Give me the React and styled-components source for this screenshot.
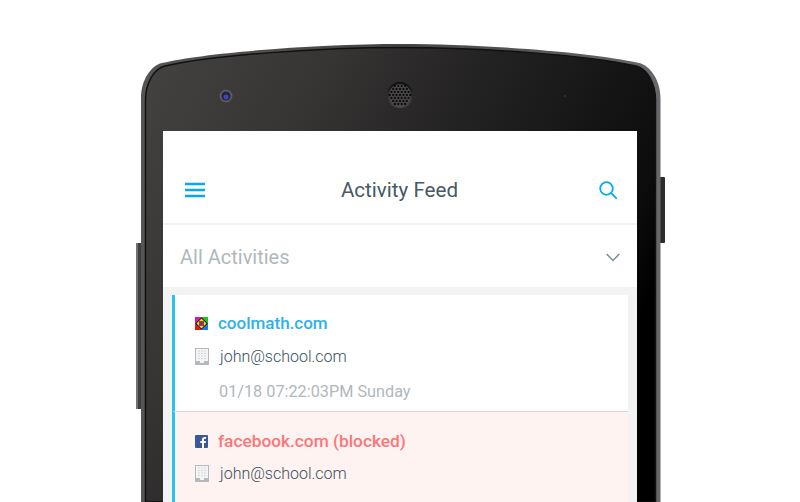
import React from 'react';
import styled, {createGlobalStyle} from 'styled-components';

const GlobalStyle = createGlobalStyle`
  html, body {
    margin: 0;
    padding: 0;
    background: #fff;
    font-family: Roboto, "Liberation Sans", sans-serif;
  }
`

const Page = styled.div`
  width: 800px;
  height: 502px;
  overflow: hidden;
  background: #fff;
`

const Device = styled.div`
  position: relative;
  width: 800px;
  height: 502px;
  padding: 131px 163px 0;
  box-sizing: border-box;
`

const Shell = styled.svg`
  position: absolute;
  left: 0;
  top: 0;
`

const Screen = styled.main`
  position: relative;
  height: 371px;
  background: #fff;
  overflow: hidden;
`

const Toolbar = styled.header`
  height: 94px;
  display: flex;
  align-items: center;
  justify-content: space-between;
  padding: 26px 20px 0 22px;
  box-sizing: border-box;
  border-bottom: 2px solid #f3f3f3;
`

const IconSlot = styled.button`
  display: flex;
  border: 0;
  padding: 0;
  background: none;
`

const Title = styled.h1`
  margin: 0 5px 0 0;
  font-size: 20.6px;
  font-weight: 400;
  color: #455a64;
`

const Filter = styled.div`
  height: 62px;
  display: flex;
  align-items: center;
  justify-content: space-between;
  padding: 2px 17px 0 17px;
  box-sizing: border-box;
  font-size: 20px;
  color: #b0b8bc;
`

const Feed = styled.section`
  background: #f3f3f3;
  padding: 8px 9px 0;
  height: 300px;
`

const Card = styled.article`
  height: ${p => p.$height}px;
  box-sizing: border-box;
  border-left: 3px solid #27c3ea;
  border-bottom: ${p => (p.$last ? '0' : '1px solid #d8d8d8')};
  background: ${p => (p.$blocked ? '#fff3f1' : '#fff')};
  padding: ${p => (p.$blocked ? '19px' : '18px')} 0 0 20px;
`

const Row = styled.div`
  height: 20px;
  display: flex;
  align-items: center;
  gap: ${p => p.$gap || 11}px;
  margin-bottom: ${p => p.$after || 0}px;
`

const Site = styled.a`
  font-size: ${p => (p.$blocked ? '17.3px' : '17px')};
  font-weight: 500;
  color: ${p => (p.$blocked ? '#ff7478' : '#2eb0f0')};
`

const Email = styled.span`
  font-size: 16px;
  font-weight: 300;
  color: #37505c;
`

const Stamp = styled.span`
  margin-left: 24px;
  font-size: 16.25px;
  font-weight: 400;
  color: #b0b8bc;
`

const MenuIcon = () => (
  <svg width="20" height="16" viewBox="0 0 20 16">
    <path d="M0 2h20M0 8h20M0 14h20" stroke="#03a9f4" strokeWidth="2.400" fill="none" />
  </svg>
)

const SearchIcon = () => (
  <svg width="18" height="18" viewBox="0 0 18 18" fill="none" stroke="#03a9f4" strokeWidth="1.800" strokeLinecap="round">
    <circle cx="7.500" cy="7.500" r="6.300" />
    <path d="M12.200 12.200l5 5" />
  </svg>
)

const ChevronIcon = () => (
  <svg width="14" height="9" viewBox="0 0 14 9" fill="none" stroke="#78909c" strokeWidth="1.500">
    <path d="M.7 1l6.300 6.500L13.300 1" />
  </svg>
)

const BuildingIcon = () => (
  <svg width="14" height="17" viewBox="0 0 14 17">
    <rect x=".5" y=".5" width="13" height="16" fill="#f4f4f4" stroke="#b4b9bc" />
    <path d="M3 3h2M6 3h2M9 3h2M3 5.500h2M6 5.500h2M9 5.500h2M3 8h2M6 8h2M9 8h2M3 10.500h2M6 10.500h2M9 10.500h2" stroke="#d5d8da" />
    <path d="M1 16v-3h4v2h4v-2h4v3z" fill="#b4b9bc" />
  </svg>
)

const CoolmathIcon = () => (
  <svg width="13" height="13" viewBox="0 0 13 13">
    <path d="M0 0h6.500L0 6.500z" fill="#e010c0" />
    <path d="M6.500 0H13v6.500z" fill="#18c818" />
    <path d="M0 6.500V13h6.500z" fill="#f01010" />
    <path d="M13 6.500V13H6.500z" fill="#1878f0" />
    <path d="M6.500 0L13 6.500 6.500 13 0 6.500z" fill="#111" />
    <path d="M6.500 1.500l5 5-5 5-5-5z" fill="#f4e010" />
    <rect x="4.500" y="4.500" width="4" height="4" fill="#405090" stroke="#c03030" />
  </svg>
)

const FacebookIcon = () => (
  <svg width="13" height="13" viewBox="0 0 13 13">
    <rect width="13" height="13" rx="1" fill="#3b5998" />
    <path d="M9 13V8h1.700l.3-2H9V4.800c0-.6.2-1 1-1h1.100V2.100C10.800 2 10.200 2 9.600 2 8 2 7 3 7 4.600V6H5.300v2H7v5z" fill="#fff" />
  </svg>
)

// hex grid of holes for the earpiece mesh
const holes = [];
for (let row = -3; row <= 3; row++) {
  for (let col = -4; col <= 4; col++) {
    const x = 400 + col * 3.4 + (row % 2 ? 1.7 : 0);
    const y = 95 + row * 3;
    if (Math.hypot(x - 400, y - 95) < 10.5) holes.push([x, y]);
  }
}

const PhoneShell = () => (
  <Shell width="800" height="502" viewBox="0 0 800 502">
    <defs>
      <linearGradient id="face" x1="148" y1="60" x2="640" y2="320" gradientUnits="userSpaceOnUse">
        <stop offset="0" stopColor="#444141" />
        <stop offset="0.3" stopColor="#363333" />
        <stop offset="0.45" stopColor="#2a2828" />
        <stop offset="0.65" stopColor="#1c1c1c" />
        <stop offset="0.9" stopColor="#0c0c0c" />
        <stop offset="1" stopColor="#000" />
      </linearGradient>
      <linearGradient id="rim" x1="141" y1="0" x2="660" y2="0" gradientUnits="userSpaceOnUse">
        <stop offset="0" stopColor="#555" />
        <stop offset="0.5" stopColor="#454545" />
        <stop offset="1" stopColor="#66676a" />
      </linearGradient>
      <linearGradient id="earpiece" x1="0" y1="0" x2="0" y2="1">
        <stop offset="0" stopColor="#0a0a0a" />
        <stop offset="1" stopColor="#4a4a4a" />
      </linearGradient>
    </defs>
    <rect x="136" y="243" width="6" height="166" rx="1" fill="#3f3f3f" />
    <rect x="136" y="243" width="2" height="166" fill="#707274" />
    <rect x="659" y="177" width="6" height="66" rx="1" fill="#2c2c2c" />
    <path d="M141 502V98C141 80 151 65.500 162 63 210 52 320 44 400.500 44 481 44 591 52 639 63 650 65.500 660.500 80 660.500 98V502Z" fill="url(#rim)" />
    <path d="M145.500 502V100C145.500 83 154 68.500 165 66 213 55 320 47.500 400.500 47.500 481 47.500 588 55 636 66 647 68.500 655.500 83 655.500 100V502Z" fill="url(#face)" stroke="#111" strokeWidth="1.500" />
    <circle cx="226" cy="96" r="6.500" fill="#5a5a62" />
    <circle cx="226" cy="96" r="4.500" fill="#23233a" />
    <circle cx="226" cy="97" r="2.500" fill="#4646b0" />
    <circle cx="400" cy="95" r="13" fill="url(#earpiece)" />
    <circle cx="400" cy="95" r="11" fill="#4c4c4c" />
    {holes.map(([x, y], i) => <circle key={i} cx={x} cy={y} r="1.150" fill="#0c0c0c" />)}
    <circle cx="565" cy="96" r="1" fill="#333" />
  </Shell>
)

const App = () => (
  <Page>
    <GlobalStyle />
    <Device>
      <PhoneShell />
      <Screen>
        <Toolbar>
          <IconSlot><MenuIcon /></IconSlot>
          <Title>Activity Feed</Title>
          <IconSlot><SearchIcon /></IconSlot>
        </Toolbar>
        <Filter>
          All Activities
          <ChevronIcon />
        </Filter>
        <Feed>
          <Card $height={117}>
            <Row $after={13} $gap={10}>
              <CoolmathIcon />
              <Site>coolmath.com</Site>
            </Row>
            <Row $after={15} $gap={11}>
              <BuildingIcon />
              <Email>john@school.com</Email>
            </Row>
            <Row>
              <Stamp>01/18 07:22:03PM Sunday</Stamp>
            </Row>
          </Card>
          <Card $height={117} $blocked $last>
            <Row $after={12} $gap={10}>
              <FacebookIcon />
              <Site $blocked>facebook.com (blocked)</Site>
            </Row>
            <Row $after={15} $gap={11}>
              <BuildingIcon />
              <Email>john@school.com</Email>
            </Row>
            <Row>
              <Stamp>01/18 07:22:03PM Sunday</Stamp>
            </Row>
          </Card>
        </Feed>
      </Screen>
    </Device>
  </Page>
);
export default App;
